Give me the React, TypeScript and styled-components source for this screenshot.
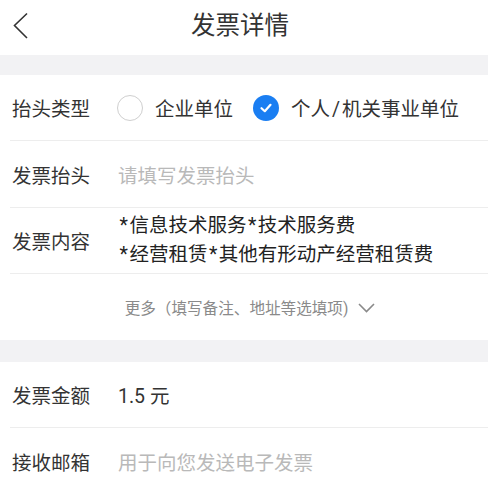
import styled, { createGlobalStyle } from 'styled-components'

const GlobalStyle = createGlobalStyle`
	html, body {
		margin: 0;
		padding: 0;
		background: #ffffff;
	}
	body {
		font-family: Roboto, "Noto Sans CJK SC", "Noto Sans", sans-serif;
		color: #333333;
	}
`

const Page = styled.div`
	width: 488px;
	height: 486px;
	overflow: hidden;
	background: #ffffff;
`

const Header = styled.header`
	position: relative;
	height: 55px;
	display: flex;
	align-items: center;
	justify-content: center;

	& > h1 {
		margin: 0;
		font-size: 24.5px;
		font-weight: 400;
		color: #333333;
		line-height: 1;
		transform: translate(-4px, -1px);
	}
`

const BackButton = styled.button`
	position: absolute;
	left: 6px;
	top: 8px;
	width: 30px;
	height: 36px;
	padding: 0;
	border: none;
	background: transparent;
	display: flex;
	align-items: center;
	justify-content: center;
`

const Gap = styled.div<{ $h: number }>`
	height: ${props => props.$h}px;
	background: #f2f2f4;
`

const Row = styled.div<{ $h?: number; $last?: boolean }>`
	margin-left: 10px;
	padding-left: 2px;
	height: ${props => props.$h ?? 65}px;
	display: flex;
	align-items: center;
	border-bottom: ${props => (props.$last ? 'none' : '1px solid #ededed')};
	font-size: 19.5px;
`

const Label = styled.span`
	width: 106px;
	flex-shrink: 0;
	color: #333333;
`

const Value = styled.span<{ $placeholder?: boolean }>`
	color: ${props => (props.$placeholder ? '#b9b9b9' : '#333333')};
`

const Lines = styled.div`
	display: flex;
	flex-direction: column;
	line-height: 29px;
	color: #222222;
	margin-top: -1px;
`

const Star = styled.span`
	display: inline-block;
	margin: 0 1.5px;
`

const Option = styled.label<{ $gap: number }>`
	display: flex;
	align-items: center;
	gap: 12px;
	margin-right: ${props => props.$gap}px;
	color: #333333;
`

const Slash = styled.span`
	margin: 0 2px;
`

const Radio = styled.span<{ $checked?: boolean }>`
	width: 26px;
	height: 26px;
	box-sizing: border-box;
	border-radius: 50%;
	border: ${props => (props.$checked ? 'none' : '1.5px solid #cfcfcf')};
	background: ${props => (props.$checked ? '#1a7ef2' : '#ffffff')};
	display: flex;
	align-items: center;
	justify-content: center;
	margin-left: -1px;
`

const MoreRow = styled.div`
	height: 66px;
	display: flex;
	align-items: center;
	justify-content: center;
	gap: 10px;
	padding-left: 12px;
	font-size: 15.6px;
	color: #8a8a8a;

	& > svg {
		margin-top: 1px;
	}
`

const App = () => {
	return (
		<Page>
			<GlobalStyle />
			<Header>
				<BackButton aria-label="back">
					<svg width="16" height="28" viewBox="0 0 16 28">
						<polyline points="14,1.5 1.5,13.5 14,26" fill="none" stroke="#333" strokeWidth="1.6" />
					</svg>
				</BackButton>
				<h1>发票详情</h1>
			</Header>
			<Gap $h={20} />
			<Row>
				<Label>抬头类型</Label>
				<Option $gap={21}>
					<Radio />
					<span>企业单位</span>
				</Option>
				<Option $gap={0}>
					<Radio $checked>
						<svg width="14" height="14" viewBox="0 0 14 14">
							<polyline points="2.5,7.2 5.8,10.2 11.5,3.8" fill="none" stroke="#fff" strokeWidth="2.2" strokeLinecap="round" strokeLinejoin="round" />
						</svg>
					</Radio>
					<span>个人<Slash>/</Slash>机关事业单位</span>
				</Option>
			</Row>
			<Row $h={66}>
				<Label>发票抬头</Label>
				<Value $placeholder>请填写发票抬头</Value>
			</Row>
			<Row>
				<Label>发票内容</Label>
				<Lines>
					<span><Star>*</Star>信息技术服务<Star>*</Star>技术服务费</span>
					<span><Star>*</Star>经营租赁<Star>*</Star>其他有形动产经营租赁费</span>
				</Lines>
			</Row>
			<MoreRow>
				<span>更多（填写备注、地址等选填项)</span>
				<svg width="17" height="10" viewBox="0 0 17 10">
					<polyline points="1,1 8.5,8.5 16,1" fill="none" stroke="#8a8a8a" strokeWidth="1.6" />
				</svg>
			</MoreRow>
			<Gap $h={22} />
			<Row>
				<Label>发票金额</Label>
				<Value>1.5 元</Value>
			</Row>
			<Row $h={66} $last>
				<Label>接收邮箱</Label>
				<Value $placeholder>用于向您发送电子发票</Value>
			</Row>
		</Page>
	)
}

export default App
